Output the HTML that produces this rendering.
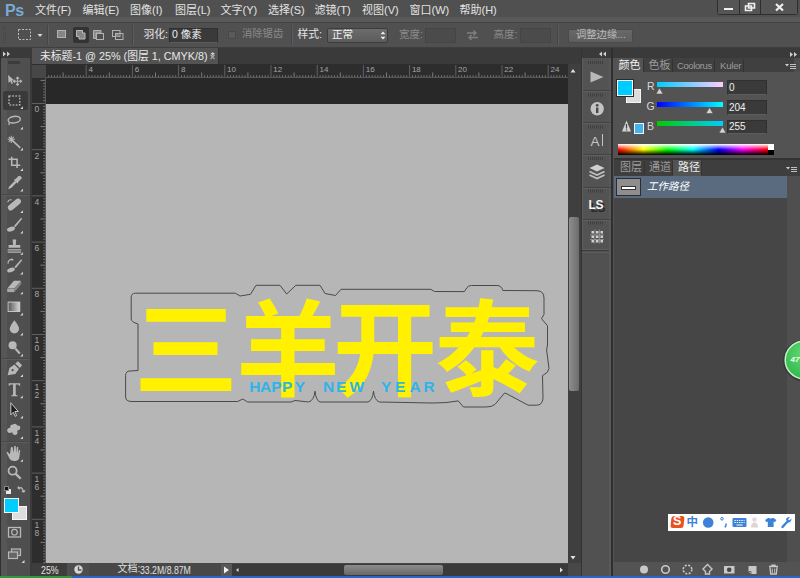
<!DOCTYPE html>
<html lang="zh"><head><meta charset="utf-8"><title>Photoshop</title>
<style>
html,body{margin:0;padding:0;background:#535353;}
#app{position:relative;width:800px;height:578px;overflow:hidden;background:#535353;font-family:"Liberation Sans","Noto Sans CJK SC",sans-serif;}
#app div,#app span{position:absolute;display:block;box-sizing:border-box;}
#app span{white-space:nowrap;line-height:1;}
#app span.h{overflow:visible;}
#ov{position:absolute;left:0;top:0;width:800px;height:578px;}
</style></head><body>
<div id="app">
<div style="left:0px;top:0px;width:800px;height:17.5px;background:#505050;"></div>
<div style="left:0px;top:17.2px;width:800px;height:4.6px;background:#595959;"></div>
<div style="left:0px;top:21.8px;width:800px;height:1.1px;background:#434343;"></div>
<div style="left:0px;top:22.9px;width:800px;height:24.6px;background:#505050;"></div>
<div style="left:0px;top:47.3px;width:800px;height:0.7px;background:#3e3e3e;"></div>
<div style="left:0px;top:48px;width:800px;height:10px;background:#3a3a3a;"></div>
<span style="left:5px;top:2.7px;font-size:16px;color:#79aad6;font-weight:bold;letter-spacing:-0.5px;">Ps</span>
<span class="h" style="left:35.0px;top:4.7px;font-size:11px;width:36.0px;height:11px;color:#e4e4e4;">文件(F)</span>
<span class="h" style="left:82.5px;top:4.7px;font-size:11px;width:35.5px;height:11px;color:#e4e4e4;">编辑(E)</span>
<span class="h" style="left:130.0px;top:4.7px;font-size:11px;width:33.0px;height:11px;color:#e4e4e4;">图像(I)</span>
<span class="h" style="left:175.0px;top:4.7px;font-size:11px;width:34.0px;height:11px;color:#e4e4e4;">图层(L)</span>
<span class="h" style="left:220.5px;top:4.7px;font-size:11px;width:37.0px;height:11px;color:#e4e4e4;">文字(Y)</span>
<span class="h" style="left:268.0px;top:4.7px;font-size:11px;width:35.0px;height:11px;color:#e4e4e4;">选择(S)</span>
<span class="h" style="left:314.5px;top:4.7px;font-size:11px;width:36.5px;height:11px;color:#e4e4e4;">滤镜(T)</span>
<span class="h" style="left:362.0px;top:4.7px;font-size:11px;width:35.5px;height:11px;color:#e4e4e4;">视图(V)</span>
<span class="h" style="left:409.5px;top:4.7px;font-size:11px;width:39.0px;height:11px;color:#e4e4e4;">窗口(W)</span>
<span class="h" style="left:459.5px;top:4.7px;font-size:11px;width:35.0px;height:11px;color:#e4e4e4;">帮助(H)</span>
<div style="left:717px;top:0px;width:81px;height:15px;background:#2e2e2e;border-radius:0 0 3px 3px;"></div>
<div style="left:718px;top:0px;width:21px;height:14px;background:#555555;"></div>
<div style="left:740px;top:0px;width:20px;height:14px;background:#555555;"></div>
<div style="left:761px;top:0px;width:36px;height:14px;background:#555555;"></div>
<div style="left:724px;top:7.5px;width:9px;height:2.5px;background:#f0f0f0;"></div>
<div style="left:47px;top:25px;width:1px;height:20px;background:#454545;"></div>
<div style="left:48px;top:25px;width:1px;height:20px;background:#5d5d5d;"></div>
<div style="left:72.5px;top:26.5px;width:16.5px;height:16.5px;background:#333333;border-radius:2px;"></div>
<div style="left:132px;top:25px;width:1px;height:20px;background:#454545;"></div>
<div style="left:133px;top:25px;width:1px;height:20px;background:#5d5d5d;"></div>
<span class="h" style="left:143.5px;top:29.0px;font-size:10.8px;width:22.0px;height:10.8px;color:#e4e4e4;">羽化:</span>
<div style="left:169px;top:27.5px;width:49px;height:15.5px;background:#3a3a3a;border:1px solid #2f2f2f;border-bottom-color:#5a5a5a;"></div>
<span class="h" style="left:172px;top:29.3px;font-size:10.5px;width:26.0px;height:10.5px;color:#f0f0f0;">0 像素</span>
<div style="left:228px;top:30.5px;width:8px;height:8.5px;background:#5a5a5a;border:1px solid #484848;"></div>
<span class="h" style="left:242px;top:29.4px;font-size:10.3px;width:38.5px;height:10.3px;color:#8a8a8a;">消除锯齿</span>
<div style="left:290.5px;top:25px;width:1px;height:20px;background:#454545;"></div>
<div style="left:291.5px;top:25px;width:1px;height:20px;background:#5d5d5d;"></div>
<span class="h" style="left:297.5px;top:29.0px;font-size:10.8px;width:23.5px;height:10.8px;color:#e4e4e4;">样式:</span>
<div style="left:327px;top:28px;width:61px;height:15px;background:#666666;border:1px solid #3c3c3c;border-radius:2px;background:linear-gradient(#6c6c6c,#5c5c5c);"></div>
<span class="h" style="left:332px;top:29.4px;font-size:10.5px;width:19.0px;height:10.5px;color:#f4f4f4;">正常</span>
<span class="h" style="left:399px;top:29.2px;font-size:10.5px;width:22.5px;height:10.5px;color:#8a8a8a;">宽度:</span>
<div style="left:425px;top:28px;width:31px;height:15px;background:#4b4b4b;border:1px solid #454545;"></div>
<span class="h" style="left:493.5px;top:29.2px;font-size:10.5px;width:22.0px;height:10.5px;color:#8a8a8a;">高度:</span>
<div style="left:520px;top:28px;width:31px;height:15px;background:#4b4b4b;border:1px solid #454545;"></div>
<div style="left:557px;top:25px;width:1px;height:20px;background:#454545;"></div>
<div style="left:558px;top:25px;width:1px;height:20px;background:#5d5d5d;"></div>
<div style="left:568px;top:28.5px;width:65px;height:14px;background:#636363;border:1px solid #4a4a4a;border-radius:2px;background:linear-gradient(#686868,#5e5e5e);"></div>
<span class="h" style="left:576px;top:29.7px;font-size:10.3px;width:48.0px;height:10.3px;color:#b8b8b8;">调整边缘...</span>
<div style="left:0px;top:58px;width:31px;height:518px;background:#565656;"></div>
<div style="left:6.8px;top:58px;width:23.2px;height:518px;background:#4f4f4f;"></div>
<div style="left:0px;top:48px;width:1px;height:528px;background:#303030;"></div>
<div style="left:30px;top:58px;width:1.5px;height:518px;background:#3b3b3b;"></div>
<div style="left:7.5px;top:61px;width:12px;height:2.5px;background:#3c3c3c;"></div>
<div style="left:3px;top:91px;width:25px;height:19px;background:#3a3a3a;border-radius:2px;"></div>
<div style="left:2px;top:194px;width:27px;height:1px;background:#474747;"></div>
<div style="left:2px;top:195px;width:27px;height:1px;background:#5c5c5c;"></div>
<div style="left:31.5px;top:48px;width:549.5px;height:16px;background:#3a3a3a;"></div>
<div style="left:32px;top:48px;width:187px;height:16px;background:#535353;border-right:1px solid #333;"></div>
<span class="h" style="left:40px;top:50.6px;font-size:10.8px;width:163.0px;height:10.8px;color:#e8e8e8;">未标题-1 @ 25% (图层 1, CMYK/8) *</span>
<div style="left:31.5px;top:64px;width:536px;height:13.5px;background:#2d2d2d;"></div>
<div style="left:31.5px;top:77.5px;width:14px;height:486px;background:#2d2d2d;"></div>
<div style="left:32px;top:65px;width:13.5px;height:12.5px;background:#474747;"></div>
<div style="left:45.5px;top:77.5px;width:522px;height:26px;background:#282828;"></div>
<div style="left:45.5px;top:103.5px;width:522px;height:459.5px;background:#b6b6b6;"></div>
<div style="left:46px;top:76.5px;width:521.5px;height:1px;background:rgba(140,140,140,0.45);"></div>
<div style="left:44.8px;top:78px;width:1px;height:485px;background:rgba(140,140,140,0.45);"></div>
<span style="left:88.5px;top:66px;font-size:8px;color:#a6a6a6;">4</span>
<span style="left:134.7px;top:66px;font-size:8px;color:#a6a6a6;">6</span>
<span style="left:180.9px;top:66px;font-size:8px;color:#a6a6a6;">8</span>
<span style="left:227.1px;top:66px;font-size:8px;color:#a6a6a6;">10</span>
<span style="left:273.3px;top:66px;font-size:8px;color:#a6a6a6;">12</span>
<span style="left:319.5px;top:66px;font-size:8px;color:#a6a6a6;">14</span>
<span style="left:365.7px;top:66px;font-size:8px;color:#a6a6a6;">16</span>
<span style="left:411.9px;top:66px;font-size:8px;color:#a6a6a6;">18</span>
<span style="left:458.1px;top:66px;font-size:8px;color:#a6a6a6;">20</span>
<span style="left:504.3px;top:66px;font-size:8px;color:#a6a6a6;">22</span>
<span style="left:550.5px;top:66px;font-size:8px;color:#a6a6a6;">24</span>
<span style="left:34.5px;top:105.3px;font-size:8.5px;color:#a6a6a6;">0</span>
<span style="left:34.5px;top:151.5px;font-size:8.5px;color:#a6a6a6;">2</span>
<span style="left:34.5px;top:197.7px;font-size:8.5px;color:#a6a6a6;">4</span>
<span style="left:34.5px;top:243.9px;font-size:8.5px;color:#a6a6a6;">6</span>
<span style="left:34.5px;top:290.1px;font-size:8.5px;color:#a6a6a6;">8</span>
<span style="left:34.5px;top:336.3px;font-size:8.5px;color:#a6a6a6;">1</span>
<span style="left:34.5px;top:344.3px;font-size:8.5px;color:#a6a6a6;">0</span>
<span style="left:34.5px;top:382.5px;font-size:8.5px;color:#a6a6a6;">1</span>
<span style="left:34.5px;top:390.5px;font-size:8.5px;color:#a6a6a6;">2</span>
<span style="left:34.5px;top:428.7px;font-size:8.5px;color:#a6a6a6;">1</span>
<span style="left:34.5px;top:436.7px;font-size:8.5px;color:#a6a6a6;">4</span>
<span style="left:34.5px;top:474.9px;font-size:8.5px;color:#a6a6a6;">1</span>
<span style="left:34.5px;top:482.9px;font-size:8.5px;color:#a6a6a6;">6</span>
<span style="left:34.5px;top:521.1px;font-size:8.5px;color:#a6a6a6;">1</span>
<span style="left:34.5px;top:529.1px;font-size:8.5px;color:#a6a6a6;">8</span>
<div style="left:567.5px;top:64px;width:13.5px;height:499px;background:#3f3f3f;"></div>
<div style="left:568.5px;top:217px;width:10px;height:174px;background:#7c7c7c;border-radius:2px;background:linear-gradient(90deg,#8e8e8e,#6c6c6c);"></div>
<div style="left:581px;top:48px;width:1px;height:528px;background:#333333;"></div>
<div style="left:31.5px;top:563px;width:549.5px;height:13px;background:#484848;"></div>
<div style="left:31.5px;top:563px;width:35px;height:13px;background:#3d3d3d;"></div>
<div style="left:66.5px;top:563px;width:22px;height:13px;background:#4e4e4e;"></div>
<span style="left:40.5px;top:564.5px;font-size:10.5px;color:#e0e0e0;transform:scaleX(0.84);transform-origin:0 0;">25%</span>
<span class="h" style="left:117.5px;top:564.0px;font-size:10px;width:22.5px;height:10px;color:#e0e0e0;">文档:</span>
<span style="left:140px;top:564.5px;font-size:10.5px;color:#e0e0e0;transform:scaleX(0.83);transform-origin:0 0;">33.2M/8.87M</span>
<div style="left:221px;top:563.5px;width:10.5px;height:12px;background:#585858;"></div>
<div style="left:231.5px;top:564px;width:336px;height:11.5px;background:#3a3a3a;"></div>
<div style="left:344px;top:564.5px;width:99px;height:10px;background:#7a7a7a;border-radius:2px;background:linear-gradient(#8c8c8c,#686868);"></div>
<div style="left:0px;top:576px;width:72px;height:2px;background:#2f9a3b;"></div>
<div style="left:72px;top:576px;width:728px;height:2px;background:#2665c9;"></div>
<div style="left:582px;top:58px;width:30px;height:518px;background:#515151;"></div>
<div style="left:582px;top:250px;width:30px;height:1px;background:#3c3c3c;"></div>
<div style="left:583px;top:251.5px;width:28px;height:1px;background:#5c5c5c;"></div>
<div style="left:582px;top:58px;width:30px;height:192px;background:#535353;border:1px solid #5e5e5e;border-top:none;"></div>
<div style="left:609.3px;top:58px;width:1.5px;height:518px;background:#595959;"></div>
<div style="left:610.8px;top:48px;width:2.7px;height:528px;background:#2f2f2f;"></div>
<div style="left:583px;top:89.5px;width:28px;height:1px;background:#424242;"></div>
<div style="left:583px;top:90.5px;width:28px;height:1px;background:#5e5e5e;"></div>
<div style="left:583px;top:121.5px;width:28px;height:1px;background:#424242;"></div>
<div style="left:583px;top:122.5px;width:28px;height:1px;background:#5e5e5e;"></div>
<div style="left:583px;top:154px;width:28px;height:1px;background:#424242;"></div>
<div style="left:583px;top:155px;width:28px;height:1px;background:#5e5e5e;"></div>
<div style="left:583px;top:186.5px;width:28px;height:1px;background:#424242;"></div>
<div style="left:583px;top:187.5px;width:28px;height:1px;background:#5e5e5e;"></div>
<div style="left:583px;top:218.5px;width:28px;height:1px;background:#424242;"></div>
<div style="left:583px;top:219.5px;width:28px;height:1px;background:#5e5e5e;"></div>
<span style="left:590.5px;top:134.5px;font-size:13.5px;color:#c4c4c4;">A</span>
<div style="left:601.5px;top:134px;width:1.3px;height:12px;background:#c4c4c4;"></div>
<span style="left:590.5px;top:201.5px;font-size:12px;color:#2c2c2c;font-weight:bold;letter-spacing:-0.3px;">LS</span>
<span style="left:588.5px;top:199px;font-size:12px;color:#f4f4f4;font-weight:bold;letter-spacing:-0.3px;">LS</span>
<div style="left:613.5px;top:58px;width:186.5px;height:518px;background:#4e4e4e;"></div>
<div style="left:613.5px;top:58px;width:180px;height:14px;background:#404040;"></div>
<div style="left:613.5px;top:72px;width:186.5px;height:86px;background:#535353;"></div>
<div style="left:613.5px;top:58px;width:29px;height:14.5px;background:#535353;"></div>
<div style="left:643px;top:59px;width:1px;height:13px;background:#333;"></div>
<div style="left:672px;top:59px;width:1px;height:13px;background:#333;"></div>
<div style="left:714px;top:59px;width:1px;height:13px;background:#333;"></div>
<div style="left:743px;top:59px;width:1px;height:13px;background:#333;"></div>
<span class="h" style="left:618.5px;top:59.9px;font-size:11px;width:19.5px;height:11px;color:#f0f0f0;">颜色</span>
<span class="h" style="left:648.5px;top:59.9px;font-size:11px;width:17.5px;height:11px;color:#9c9c9c;">色板</span>
<span style="left:677px;top:61px;font-size:9.5px;color:#9c9c9c;letter-spacing:-0.4px;">Coolorus</span>
<span style="left:720px;top:61px;font-size:9.5px;color:#9c9c9c;letter-spacing:-0.2px;">Kuler</span>
<div style="left:626px;top:89px;width:14.5px;height:14px;background:#dcdcdc;border:1px solid #f4f4f4;"></div>
<div style="left:617px;top:79.5px;width:16px;height:16.5px;background:#00ccff;border:1px solid #f8f8f8;outline:1px solid #2a2a2a;"></div>
<span style="left:647px;top:81px;font-size:10.5px;color:#d8d8d8;">R</span>
<span style="left:646.5px;top:101px;font-size:10.5px;color:#d8d8d8;">G</span>
<span style="left:647px;top:120.5px;font-size:10.5px;color:#d8d8d8;">B</span>
<div style="left:657px;top:82px;width:65.5px;height:5px;background:linear-gradient(90deg,#00ccff,#ffccff);"></div>
<div style="left:657px;top:101.5px;width:65.5px;height:5px;background:linear-gradient(90deg,#0000ff,#00ffff);"></div>
<div style="left:657px;top:121px;width:65.5px;height:5px;background:linear-gradient(90deg,#00cc00,#00ccff);"></div>
<div style="left:727px;top:80px;width:39.5px;height:14.5px;background:#3a3a3a;border:1px solid #303030;border-bottom-color:#5c5c5c;"></div>
<span style="left:729px;top:82.8px;font-size:10px;color:#f0f0f0;">0</span>
<div style="left:727px;top:100px;width:39.5px;height:14.5px;background:#3a3a3a;border:1px solid #303030;border-bottom-color:#5c5c5c;"></div>
<span style="left:729px;top:102.8px;font-size:10px;color:#f0f0f0;">204</span>
<div style="left:727px;top:119.5px;width:39.5px;height:14.5px;background:#3a3a3a;border:1px solid #303030;border-bottom-color:#5c5c5c;"></div>
<span style="left:729px;top:122.3px;font-size:10px;color:#f0f0f0;">255</span>
<div style="left:633.5px;top:123px;width:10.5px;height:10.5px;background:#45b3ea;border:1px solid #e8f4fc;"></div>
<div style="left:618px;top:143.5px;width:149.5px;height:11.5px;background:linear-gradient(90deg,#ff0000 0%,#ffff00 17%,#00ff00 33%,#00ffff 50%,#0000ff 67%,#ff00ff 83%,#ff0000 100%);"></div>
<div style="left:618px;top:143.5px;width:149.5px;height:11.5px;background:linear-gradient(180deg,#ffffff 0%,rgba(255,255,255,0) 50%,rgba(0,0,0,0) 50%,#000000 100%);"></div>
<div style="left:767.5px;top:143.5px;width:6.5px;height:6px;background:#ffffff;"></div>
<div style="left:767.5px;top:149.5px;width:6.5px;height:5.5px;background:#000000;"></div>
<div style="left:613.5px;top:158px;width:186.5px;height:2px;background:#333333;"></div>
<div style="left:613.5px;top:160px;width:186.5px;height:15.5px;background:#3e3e3e;"></div>
<div style="left:673px;top:160px;width:28px;height:15.5px;background:#535353;"></div>
<div style="left:644px;top:161px;width:1px;height:14px;background:#323232;"></div>
<div style="left:672px;top:161px;width:1px;height:14px;background:#323232;"></div>
<div style="left:701px;top:161px;width:1px;height:14px;background:#323232;"></div>
<span class="h" style="left:620px;top:162.1px;font-size:11px;width:18.0px;height:11px;color:#9c9c9c;">图层</span>
<span class="h" style="left:649px;top:162.1px;font-size:11px;width:18.5px;height:11px;color:#9c9c9c;">通道</span>
<span class="h" style="left:678px;top:162.1px;font-size:11px;width:18.5px;height:11px;color:#f0f0f0;">路径</span>
<div style="left:613.5px;top:175.5px;width:173px;height:386px;background:#464646;"></div>
<div style="left:786.5px;top:175.5px;width:13.5px;height:386px;background:#4f4f4f;"></div>
<div style="left:613.5px;top:175.5px;width:173px;height:22.5px;background:#5a6b80;"></div>
<div style="left:615.5px;top:178px;width:25px;height:18px;background:#8e8e8e;border:1px solid #2c2c2c;"></div>
<div style="left:621px;top:185.5px;width:15px;height:4px;background:#ffffff;border:1px solid #333;"></div>
<span class="h" style="left:647px;top:181.1px;font-size:10.5px;width:39.0px;height:10.5px;color:#ffffff;font-style:italic;">工作路径</span>
<div style="left:613.5px;top:561.5px;width:186.5px;height:14.5px;background:#535353;"></div>
<div style="left:2px;top:357.5px;width:27px;height:1px;background:#474747;"></div>
<div style="left:2px;top:358.5px;width:27px;height:1px;background:#5c5c5c;"></div>
<div style="left:2px;top:441px;width:27px;height:1px;background:#474747;"></div>
<div style="left:2px;top:442px;width:27px;height:1px;background:#5c5c5c;"></div>
<div style="left:6px;top:488.5px;width:5px;height:5px;background:#e8e8e8;"></div>
<div style="left:3.5px;top:486px;width:5px;height:5px;background:#141414;border:0.500px solid #888;"></div>
<div style="left:12px;top:505.5px;width:14.5px;height:14.5px;background:#dedede;border:1px solid #f6f6f6;"></div>
<div style="left:3.5px;top:498px;width:15px;height:14.5px;background:#00ccff;border:1px solid #f8f8f8;"></div>
<div style="left:668px;top:513.5px;width:127px;height:17.5px;background:#ffffff;"></div>
<div style="left:670.5px;top:516px;width:12.5px;height:11.5px;background:#e8531f;border-radius:2.500px;transform:skewX(-6deg);"></div>
<span style="left:673px;top:515.3px;font-size:12.5px;color:#ffffff;font-weight:bold;">S</span>
<span class="h" style="left:686.5px;top:516.6px;font-size:11.5px;width:12.0px;height:11.5px;color:#3d82d6;font-weight:bold;">中</span>
<svg id="ov" width="800" height="578" viewBox="0 0 800 578">
<path d="M3.5 26v18M5.500 26v18" stroke="#444" stroke-width="1" stroke-dasharray="1 1" fill="none"/>
<path d="M748.5 3.5h6v4.5h-6z M745.5 6h6v4.500h-6z" fill="none" stroke="#f0f0f0" stroke-width="1.600"/>
<path d="M776 4l7 6.500M783 4l-7 6.500" stroke="#f0f0f0" stroke-width="2.200" fill="none"/>
<rect x="18.500" y="29.500" width="12" height="10" fill="none" stroke="#bebebe" stroke-width="1" stroke-dasharray="2 1.500"/>
<path d="M37.500 34h5l-2.500 3z" fill="#d8d8d8"/>
<rect x="57.500" y="30.500" width="8" height="7" fill="#868686" stroke="#b2b2b2"/>
<path d="M76.500 30.500h6v2.500h2.500v6h-6v-2.500h-2.500z" fill="#868686" stroke="#bababa"/>
<path d="M93.500 30.500h7.500v2.500h-5v5.500h-2.500z" fill="#868686" stroke="#b2b2b2"/><rect x="96.500" y="33.500" width="7" height="6" fill="none" stroke="#b2b2b2"/>
<rect x="112.500" y="30.500" width="7.500" height="6" fill="none" stroke="#b2b2b2"/><rect x="115.500" y="33.500" width="7.500" height="6" fill="none" stroke="#b2b2b2"/><rect x="116" y="34" width="3.500" height="2.500" fill="#868686"/>
<path d="M380.500 34.200l2.500-2.700 2.500 2.700z M380.500 36.800l2.500 2.700 2.500-2.700z" fill="#eeeeee"/>
<path d="M467 33h9m-2.500-2.500l2.500 2.500-2.500 2.500M478 37.500h-9m2.500-2.500l-2.500 2.500 2.500 2.500" stroke="#808080" stroke-width="1.300" fill="none"/>
<path d="M3 51.500l3 2.500-3 2.500z M7 51.500l3 2.500-3 2.500z" fill="#d0d0d0"/>
<path d="M210.500 55l4 4m0-4l-4 4" stroke="#a8a8a8" stroke-width="1.100" fill="none"/>
<path d="M48.700 75.300v1.700 M51.500 75.300v1.700 M54.400 75.300v1.700 M57.300 75.300v1.700 M60.200 75.300v1.700 M66.0 75.300v1.700 M68.900 75.300v1.700 M71.800 75.300v1.700 M74.700 75.300v1.700 M77.500 75.300v1.700 M80.400 75.300v1.700 M83.300 75.300v1.700 M89.100 75.300v1.700 M92.0 75.300v1.700 M94.900 75.300v1.700 M97.800 75.300v1.700 M100.600 75.300v1.700 M103.500 75.300v1.700 M106.400 75.300v1.700 M112.200 75.300v1.700 M115.100 75.300v1.700 M118.0 75.300v1.700 M120.900 75.300v1.700 M123.700 75.300v1.700 M126.600 75.300v1.700 M129.500 75.300v1.700 M135.300 75.300v1.700 M138.200 75.300v1.700 M141.100 75.300v1.700 M143.900 75.300v1.700 M146.800 75.300v1.700 M149.700 75.300v1.700 M152.600 75.300v1.700 M158.400 75.300v1.700 M161.300 75.300v1.700 M164.200 75.300v1.700 M167.100 75.300v1.700 M169.900 75.300v1.700 M172.800 75.300v1.700 M175.700 75.300v1.700 M181.500 75.300v1.700 M184.400 75.300v1.700 M187.300 75.300v1.700 M190.200 75.300v1.700 M193.0 75.300v1.700 M195.900 75.300v1.700 M198.800 75.300v1.700 M204.600 75.300v1.700 M207.500 75.300v1.700 M210.400 75.300v1.700 M213.200 75.300v1.700 M216.100 75.300v1.700 M219.0 75.300v1.700 M221.900 75.300v1.700 M227.700 75.300v1.700 M230.600 75.300v1.700 M233.500 75.300v1.700 M236.400 75.300v1.700 M239.200 75.300v1.700 M242.100 75.300v1.700 M245.0 75.300v1.700 M250.800 75.300v1.700 M253.700 75.300v1.700 M256.600 75.300v1.700 M259.500 75.300v1.700 M262.300 75.300v1.700 M265.200 75.300v1.700 M268.100 75.300v1.700 M273.900 75.300v1.700 M276.800 75.300v1.700 M279.700 75.300v1.700 M282.600 75.300v1.700 M285.400 75.300v1.700 M288.300 75.300v1.700 M291.200 75.300v1.700 M297.0 75.300v1.700 M299.900 75.300v1.700 M302.800 75.300v1.700 M305.700 75.300v1.700 M308.500 75.300v1.700 M311.400 75.300v1.700 M314.300 75.300v1.700 M320.100 75.300v1.700 M323.0 75.300v1.700 M325.900 75.300v1.700 M328.800 75.300v1.700 M331.600 75.300v1.700 M334.500 75.300v1.700 M337.400 75.300v1.700 M343.200 75.300v1.700 M346.100 75.300v1.700 M349.0 75.300v1.700 M351.900 75.300v1.700 M354.700 75.300v1.700 M357.600 75.300v1.700 M360.500 75.300v1.700 M366.300 75.300v1.700 M369.200 75.300v1.700 M372.100 75.300v1.700 M375.0 75.300v1.700 M377.800 75.300v1.700 M380.700 75.300v1.700 M383.600 75.300v1.700 M389.400 75.300v1.700 M392.300 75.300v1.700 M395.200 75.300v1.700 M398.100 75.300v1.700 M400.900 75.300v1.700 M403.800 75.300v1.700 M406.700 75.300v1.700 M412.500 75.300v1.700 M415.400 75.300v1.700 M418.300 75.300v1.700 M421.200 75.300v1.700 M424.0 75.300v1.700 M426.900 75.300v1.700 M429.800 75.300v1.700 M435.600 75.300v1.700 M438.500 75.300v1.700 M441.400 75.300v1.700 M444.300 75.300v1.700 M447.100 75.300v1.700 M450.0 75.300v1.700 M452.900 75.300v1.700 M458.700 75.300v1.700 M461.600 75.300v1.700 M464.500 75.300v1.700 M467.400 75.300v1.700 M470.200 75.300v1.700 M473.100 75.300v1.700 M476.0 75.300v1.700 M481.800 75.300v1.700 M484.700 75.300v1.700 M487.600 75.300v1.700 M490.500 75.300v1.700 M493.300 75.300v1.700 M496.200 75.300v1.700 M499.100 75.300v1.700 M504.900 75.300v1.700 M507.800 75.300v1.700 M510.700 75.300v1.700 M513.500 75.300v1.700 M516.400 75.300v1.700 M519.300 75.300v1.700 M522.200 75.300v1.700 M528.0 75.300v1.700 M530.900 75.300v1.700 M533.800 75.300v1.700 M536.600 75.300v1.700 M539.500 75.300v1.700 M542.400 75.300v1.700 M545.300 75.300v1.700 M551.100 75.300v1.700 M554.0 75.300v1.700 M556.900 75.300v1.700 M559.800 75.300v1.700 M562.600 75.300v1.700 M565.500 75.300v1.700 M43.300 83.300h1.700 M43.300 86.200h1.700 M43.300 89.100h1.700 M43.300 92.0h1.700 M43.300 94.800h1.700 M43.300 97.700h1.700 M43.300 100.600h1.700 M43.300 106.400h1.700 M43.300 109.300h1.700 M43.300 112.200h1.700 M43.300 115.0h1.700 M43.300 117.900h1.700 M43.300 120.800h1.700 M43.300 123.700h1.700 M43.300 129.500h1.700 M43.300 132.400h1.700 M43.300 135.300h1.700 M43.300 138.200h1.700 M43.300 141.0h1.700 M43.300 143.900h1.700 M43.300 146.800h1.700 M43.300 152.600h1.700 M43.300 155.500h1.700 M43.300 158.400h1.700 M43.300 161.200h1.700 M43.300 164.100h1.700 M43.300 167.0h1.700 M43.300 169.900h1.700 M43.300 175.700h1.700 M43.300 178.600h1.700 M43.300 181.500h1.700 M43.300 184.400h1.700 M43.300 187.200h1.700 M43.300 190.100h1.700 M43.300 193.0h1.700 M43.300 198.800h1.700 M43.300 201.700h1.700 M43.300 204.600h1.700 M43.300 207.400h1.700 M43.300 210.300h1.700 M43.300 213.200h1.700 M43.300 216.100h1.700 M43.300 221.900h1.700 M43.300 224.800h1.700 M43.300 227.700h1.700 M43.300 230.600h1.700 M43.300 233.400h1.700 M43.300 236.300h1.700 M43.300 239.200h1.700 M43.300 245.0h1.700 M43.300 247.900h1.700 M43.300 250.800h1.700 M43.300 253.700h1.700 M43.300 256.500h1.700 M43.300 259.400h1.700 M43.300 262.300h1.700 M43.300 268.100h1.700 M43.300 271.0h1.700 M43.300 273.900h1.700 M43.300 276.800h1.700 M43.300 279.600h1.700 M43.300 282.500h1.700 M43.300 285.400h1.700 M43.300 291.200h1.700 M43.300 294.100h1.700 M43.300 297.0h1.700 M43.300 299.900h1.700 M43.300 302.700h1.700 M43.300 305.600h1.700 M43.300 308.500h1.700 M43.300 314.300h1.700 M43.300 317.200h1.700 M43.300 320.100h1.700 M43.300 323.0h1.700 M43.300 325.800h1.700 M43.300 328.700h1.700 M43.300 331.600h1.700 M43.300 337.400h1.700 M43.300 340.300h1.700 M43.300 343.200h1.700 M43.300 346.100h1.700 M43.300 348.900h1.700 M43.300 351.800h1.700 M43.300 354.700h1.700 M43.300 360.500h1.700 M43.300 363.400h1.700 M43.300 366.300h1.700 M43.300 369.200h1.700 M43.300 372.0h1.700 M43.300 374.900h1.700 M43.300 377.800h1.700 M43.300 383.600h1.700 M43.300 386.500h1.700 M43.300 389.400h1.700 M43.300 392.200h1.700 M43.300 395.100h1.700 M43.300 398.0h1.700 M43.300 400.900h1.700 M43.300 406.700h1.700 M43.300 409.600h1.700 M43.300 412.500h1.700 M43.300 415.400h1.700 M43.300 418.200h1.700 M43.300 421.100h1.700 M43.300 424.0h1.700 M43.300 429.800h1.700 M43.300 432.700h1.700 M43.300 435.600h1.700 M43.300 438.500h1.700 M43.300 441.300h1.700 M43.300 444.200h1.700 M43.300 447.100h1.700 M43.300 452.900h1.700 M43.300 455.800h1.700 M43.300 458.700h1.700 M43.300 461.600h1.700 M43.300 464.400h1.700 M43.300 467.300h1.700 M43.300 470.200h1.700 M43.300 476.0h1.700 M43.300 478.900h1.700 M43.300 481.800h1.700 M43.300 484.700h1.700 M43.300 487.500h1.700 M43.300 490.400h1.700 M43.300 493.300h1.700 M43.300 499.100h1.700 M43.300 502.0h1.700 M43.300 504.900h1.700 M43.300 507.800h1.700 M43.300 510.600h1.700 M43.300 513.500h1.700 M43.300 516.400h1.700 M43.300 522.200h1.700 M43.300 525.100h1.700 M43.300 528.0h1.700 M43.300 530.900h1.700 M43.300 533.700h1.700 M43.300 536.600h1.700 M43.300 539.500h1.700 M43.300 545.300h1.700 M43.300 548.200h1.700 M43.300 551.100h1.700 M43.300 554.0h1.700 M43.300 556.800h1.700 M43.300 559.700h1.700 M43.300 562.600h1.700" stroke="#787878" stroke-width="1" fill="none"/>
<path d="M63.100 72.500v4.500 M109.300 72.500v4.500 M155.500 72.500v4.500 M201.700 72.500v4.500 M247.900 72.500v4.500 M294.100 72.500v4.500 M340.300 72.500v4.500 M386.500 72.500v4.500 M432.700 72.500v4.500 M478.900 72.500v4.500 M525.100 72.500v4.500 M40.500 80.400h4.500 M40.500 126.600h4.500 M40.500 172.800h4.500 M40.500 219.0h4.500 M40.500 265.200h4.500 M40.500 311.400h4.500 M40.500 357.600h4.500 M40.500 403.800h4.500 M40.500 450.0h4.500 M40.500 496.200h4.500 M40.500 542.400h4.500" stroke="#7c7c7c" stroke-width="1" fill="none"/>
<path d="M86.200 65v12 M132.400 65v12 M178.600 65v12 M224.800 65v12 M271.0 65v12 M317.200 65v12 M363.400 65v12 M409.600 65v12 M455.800 65v12 M502.0 65v12 M548.200 65v12 M32 103.500h13 M32 149.700h13 M32 195.900h13 M32 242.100h13 M32 288.300h13 M32 334.500h13 M32 380.700h13 M32 426.900h13 M32 473.100h13 M32 519.300h13" stroke="#606060" stroke-width="1" fill="none"/>
<path d="M570.500 72.500h5l-2.500-3.500z M570.500 556h5l-2.500 3.500z" fill="#e0e0e0"/>
<circle cx="78.500" cy="569.500" r="4.200" fill="#d8d8d8"/><path d="M78.500 566.500v3.500h3" stroke="#555" stroke-width="1.400" fill="none"/>
<path d="M224 566.500v7l5-3.500z" fill="#f0f0f0"/>
<path d="M238.500 568v4l-2.500-2z M560 567.500v5l3-2.500z" fill="#e0e0e0"/>
<path d="M602 51.500l-3 2.500 3 2.500z M606 51.500l-3 2.500 3 2.500z" fill="#d0d0d0"/>
<path d="M588 62.500h16" stroke="#3f3f3f" stroke-width="3" stroke-dasharray="1 1" fill="none"/>
<path d="M588 95h16" stroke="#3f3f3f" stroke-width="3" stroke-dasharray="1 1" fill="none"/>
<path d="M588 127h16" stroke="#3f3f3f" stroke-width="3" stroke-dasharray="1 1" fill="none"/>
<path d="M588 158.500h16" stroke="#3f3f3f" stroke-width="3" stroke-dasharray="1 1" fill="none"/>
<path d="M588 191h16" stroke="#3f3f3f" stroke-width="3" stroke-dasharray="1 1" fill="none"/>
<path d="M588 223h16" stroke="#3f3f3f" stroke-width="3" stroke-dasharray="1 1" fill="none"/>
<path d="M590.500 71.500l13 5.500-13 5.500z" fill="#b8b8b8"/>
<circle cx="597.200" cy="108.800" r="6.700" fill="#c4c4c4"/><circle cx="597.200" cy="105.300" r="1.400" fill="#4a4a4a"/><path d="M596 107.500h2.400v5.500h-2.400z" fill="#4a4a4a"/>
<path d="M597 164.500l7.500 3.500-7.500 3.500-7.500-3.500z" fill="#d0d0d0"/><path d="M589.500 171.500l7.500 3.500 7.500-3.500M589.500 175l7.500 3.500 7.500-3.500" stroke="#c0c0c0" stroke-width="1.800" fill="none"/>
<rect x="591.500" y="231.0" width="2.500" height="2.500" fill="#cfcfcf"/><rect x="591.500" y="235.500" width="2.500" height="2.500" fill="#cfcfcf"/><rect x="591.500" y="240.0" width="2.500" height="2.500" fill="#cfcfcf"/><rect x="596.0" y="231.0" width="2.500" height="2.500" fill="#cfcfcf"/><rect x="596.0" y="235.500" width="2.500" height="2.500" fill="#cfcfcf"/><rect x="596.0" y="240.0" width="2.500" height="2.500" fill="#cfcfcf"/><rect x="600.500" y="231.0" width="2.500" height="2.500" fill="#cfcfcf"/><rect x="600.500" y="235.500" width="2.500" height="2.500" fill="#cfcfcf"/><rect x="600.500" y="240.0" width="2.500" height="2.500" fill="#cfcfcf"/>
<path d="M590 235h14M590 239.500h14M595 229.500v14M599.500 229.500v14" stroke="#a0a0a0" stroke-width="0.700" fill="none"/>
<path d="M790 52l3 2.500-3 2.500z M794 52l3 2.500-3 2.500z" fill="#d0d0d0"/>
<path d="M785 64h4l-2 2.500z" fill="#d0d0d0"/><path d="M790 64.500h6M790 66.500h6M790 68.500h6" stroke="#c0c0c0" stroke-width="1"/>
<path d="M659.500 88l3.500 6h-7z" fill="#d4d4d4" stroke="#555" stroke-width="0.600"/>
<path d="M709.500 107.500l3.500 6h-7z" fill="#d4d4d4" stroke="#555" stroke-width="0.600"/>
<path d="M722.500 127l3.500 6h-7z" fill="#d4d4d4" stroke="#555" stroke-width="0.600"/>
<path d="M626.500 120.500l4.500 11h-9z" fill="#d4d4d4"/><path d="M626.500 124v4.500M626.500 129.300v1.200" stroke="#4a4a4a" stroke-width="1.300"/>
<path d="M786 167h4l-2 2.500z" fill="#d0d0d0"/><path d="M791 167.500h6M791 169.500h6M791 171.500h6" stroke="#c0c0c0" stroke-width="1"/>
<text font-family="Liberation Sans, Noto Sans CJK SC, sans-serif" font-weight="bold" font-size="104" fill="#fff100" text-anchor="middle" y="388" x="186 288 385 487">三羊开泰</text>
<text font-family="Liberation Sans, sans-serif" font-weight="bold" font-size="15.500" fill="#2fb4e9" y="392.200"><tspan x="249.200 259.900 271.300 282.100 294.800">HAPPY </tspan><tspan x="323.100 336.100 349.500">NEW </tspan><tspan x="380.900 395.100 409.400 423.500">YEAR</tspan></text>
<path d="M135.500 293.200H235.400L240 296L250.500 294.300L256 285.300H280L286.700 294L295.800 285.300H320L325 293.500L335.500 295.500L341 289.300H430.700L434.500 291.500L464.400 291.600L467 287.600Q468.500 285.500 471.400 285.500H497Q501.500 285.500 502.900 290.500L537 290.700Q544 291 544 298V314.400L541.500 318.700L547.500 325.700V345L546.600 350L549 368.500Q548.500 373 542.500 375.500L543 398.200Q542.500 405.200 536.500 405.200H528.200L507.200 394L504.600 393L495 404.400Q492 407 486.200 407H463.500L458.200 400.900L446 402.600L432 403L379.500 402Q374.500 400.500 373.500 391.200Q372.500 400.500 368 402H320Q316 400.500 315 391.200Q314 400.500 308.600 402L295 400.500L291 402H247.600L242.800 399L237.700 401.500H132Q125.600 401.500 125.600 397V375.600Q125.600 371 130 371L138 370.500V324Q131.200 322 131.200 319V297.500Q131.200 293.200 135.500 293.200Z" fill="none" stroke="#4a4a4a" stroke-width="1" stroke-linejoin="round"/>
<g transform="translate(14.400 79) scale(0.9)"><path d="M-7 -4.500l0.500 9 2-2 1.500 3 1.500-.700-1.500-3h3z" fill="#b8b8b8"/><path d="M3.500 -1.500v8M-.500 2.500h8M3.500 -2.500l-1.500 2h3zM3.500 7.500l-1.500-2h3zM-1.500 2.500l2-1.500v3zM8.500 2.500l-2-1.500v3z" stroke="#b8b8b8" stroke-width="1" fill="#b8b8b8"/></g>
<g transform="translate(14.400 100.500) scale(0.9)"><rect x="-6" y="-5" width="12" height="10" fill="none" stroke="#d4d4d4" stroke-width="1.200" stroke-dasharray="2 1.500"/><path d="M9.500 6.500v3h-3z" fill="#d8d8d8"/></g>
<g transform="translate(14.400 121) scale(0.9)"><ellipse cx="0" cy="-1.500" rx="6.800" ry="3.600" fill="none" stroke="#b8b8b8" stroke-width="1.600" transform="rotate(-8)"/><path d="M-5 1q-2 1.500 -.500 3.500" fill="none" stroke="#b8b8b8" stroke-width="1.300"/><path d="M9.500 6.500v3h-3z" fill="#d8d8d8"/></g>
<g transform="translate(14.400 142) scale(0.9)"><path d="M-3.500 -7v8M-7.500 -3h8M-6.300 -5.800l5.600 5.600M-.700 -5.800l-5.600 5.600" stroke="#b8b8b8" stroke-width="1.200"/><path d="M-2 -1.500l8.500 8" stroke="#b8b8b8" stroke-width="1.800"/><path d="M9.500 6.500v3h-3z" fill="#d8d8d8"/></g>
<g transform="translate(14.400 162.500) scale(0.9)"><path d="M-3 -6.500v9.500h9.500M-6.500 -3.500h9.500v9.500" fill="none" stroke="#b8b8b8" stroke-width="1.700"/><path d="M9.500 6.500v3h-3z" fill="#d8d8d8"/></g>
<g transform="translate(14.400 183) scale(0.9)"><path d="M-7 7l1.500-3.500 6-6 2 2-6 6z" fill="#b8b8b8"/><path d="M0 -4l4 4M1.500 -3.500l3.500-3.500q2 -.500 2.500 1.500l-3.500 3.500z" stroke="#b8b8b8" stroke-width="1.500" fill="#b8b8b8"/><path d="M9.500 6.500v3h-3z" fill="#d8d8d8"/></g>
<g transform="translate(14.400 204.500) scale(0.9)"><rect x="-8.500" y="-3.200" width="17" height="6.400" rx="3.200" fill="#b8b8b8" transform="rotate(-40)"/><path d="M-7.500 -2.500q1-3.500 4.500-2.500" stroke="#b8b8b8" fill="none" stroke-width="1.200"/><path d="M9.500 6.500v3h-3z" fill="#d8d8d8"/></g>
<g transform="translate(14.400 225) scale(0.9)"><path d="M7.500 -8l-8 9 1.600 1.600 7.500-9.500z" fill="#b8b8b8"/><ellipse cx="-3.800" cy="4.500" rx="4.600" ry="2.500" transform="rotate(-18 -3.800 4.500)" fill="#b8b8b8"/><path d="M9.500 6.500v3h-3z" fill="#d8d8d8"/></g>
<g transform="translate(14.400 246.300) scale(0.9)"><path d="M-2 -7.500h4l-.500 6h5v3h-13v-3h5z" fill="#b8b8b8"/><path d="M-7.500 4h15M-7.500 6.500h15" stroke="#b8b8b8" stroke-width="1.200"/><path d="M9.500 6.500v3h-3z" fill="#d8d8d8"/></g>
<g transform="translate(14.400 266) scale(0.9)"><path d="M7.500 -7.500l-7.500 8.500 1.600 1.600 7-9z" fill="#b8b8b8"/><ellipse cx="-3.800" cy="4.500" rx="4.400" ry="2.300" transform="rotate(-18 -3.800 4.500)" fill="#b8b8b8"/><path d="M-7 -2.500a4 4 0 0 1 5.500-4.500" stroke="#b8b8b8" stroke-width="1.300" fill="none"/><path d="M-2.800 -8.500l2.200 2.200-3.200 .300z" fill="#b8b8b8"/><path d="M9.500 6.500v3h-3z" fill="#d8d8d8"/></g>
<g transform="translate(14.400 285.800) scale(0.9)"><path d="M-8 3l7.500-8.500h8l-7.500 8.500z" fill="#b8b8b8"/><path d="M-8 3.500h8v3.500h-8z" fill="#a8a8a8"/><path d="M0 3.500l7.500-8.500v3l-7.500 9z" fill="#8c8c8c"/><path d="M9.500 6.500v3h-3z" fill="#d8d8d8"/></g>
<defs><linearGradient id="tg" x1="0" x2="1"><stop offset="0" stop-color="#555"/><stop offset="1" stop-color="#d8d8d8"/></linearGradient></defs>
<g transform="translate(14.400 307) scale(0.9)"><rect x="-7" y="-5.500" width="13" height="10.500" fill="url(#tg)" stroke="#cfcfcf" stroke-width="1"/><path d="M9.500 6.500v3h-3z" fill="#d8d8d8"/></g>
<g transform="translate(14.400 327) scale(0.9)"><path d="M0 -7.500q5.200 6.500 5.200 9.500a5.200 5.200 0 0 1-10.400 0q0-3 5.200-9.500z" fill="#b8b8b8"/><path d="M9.500 6.500v3h-3z" fill="#d8d8d8"/></g>
<g transform="translate(14.400 348) scale(0.9)"><circle cx="-2" cy="-3" r="4.500" fill="#b8b8b8"/><path d="M1 .500l5 5.500" stroke="#b8b8b8" stroke-width="2.400"/><path d="M9.500 6.500v3h-3z" fill="#d8d8d8"/></g>
<g transform="translate(14.400 368.500) scale(0.9)"><path d="M-7.500 7.500l2-8 5.500-4 5 5-4 5.500z" fill="#b8b8b8"/><path d="M1 -5.500l3-2.500 4.500 4.500-2.500 3z" fill="#b8b8b8"/><circle cx="-2" cy="1.800" r="1.300" fill="#555"/><path d="M9.500 6.500v3h-3z" fill="#d8d8d8"/></g>
<g transform="translate(14.400 389.800) scale(0.88)"><path d="M-6.500 -7.500h13v3h-1q-.300-1.500-1.800-1.500h-2.200v11q0 1.300 1.500 1.300h.500v1h-7v-1h.500q1.500 0 1.500-1.300v-11h-2.200q-1.500 0-1.800 1.500h-1z" fill="#b8b8b8"/><path d="M9.500 6.500v3h-3z" fill="#d8d8d8"/></g>
<g transform="translate(14.400 410) scale(0.9)"><path d="M-4 -8v13.500l2.800-3 2 4.500 1.700-.800-2-4.500h3.800z" fill="#1e1e1e" stroke="#c8c8c8" stroke-width="1.100"/><path d="M9.500 6.500v3h-3z" fill="#d8d8d8"/></g>
<g transform="translate(14.400 430.500) scale(0.9)"><path d="M-1 -7q3-1.500 4 1.500q4 -.500 3.500 3q-.500 2.500-3.500 2.500q1.500 4-2 5q-3 .500-3.500-3q-4.500 2-5.500-1.500q-.500-3 3.500-3.500q-1-3.500 3.500-4z" fill="#b8b8b8"/><path d="M9.500 6.500v3h-3z" fill="#d8d8d8"/></g>
<g transform="translate(14.400 453.300) scale(0.9)"><path d="M-5 1l-2.500-2.500q-1.200-.500-1.200 1l3.700 7q1.500 2 4.500 2h2q3.500-.500 4-4l1-7.500q-.300-1.200-1.500-.500l-1 4 .300-7q-.500-1.200-1.700-.300l-.600 6.500-.500-7.500q-.700-1.200-1.800 0l-.200 7.500-1.500-6.500q-1-1-1.800 0z" fill="#b8b8b8"/><path d="M9.500 6.500v3h-3z" fill="#d8d8d8"/></g>
<g transform="translate(14.400 472) scale(0.9)"><circle cx="-2" cy="-1.500" r="4.500" fill="none" stroke="#b8b8b8" stroke-width="2"/><path d="M1.500 2l5.500 5.500" stroke="#b8b8b8" stroke-width="2.600"/></g>
<path d="M18 488.500q3.500-2.500 5 1.500M23 490l.800 2.200M18 488.500l.5-2.200M18 488.500l2.300.400M23.800 492.200l1.200-2M23.800 492.200l-2-1.200" stroke="#b8b8b8" stroke-width="1.200" fill="none"/>
<rect x="8.500" y="527.500" width="12" height="9.500" fill="none" stroke="#b8b8b8" stroke-width="1.300"/><circle cx="14.500" cy="532.200" r="2.800" fill="none" stroke="#b8b8b8" stroke-width="1.200"/>
<rect x="11.500" y="549" width="9" height="6.500" fill="#666" stroke="#b8b8b8" stroke-width="1.200"/><rect x="8.500" y="552" width="9" height="6.500" fill="#666" stroke="#b8b8b8" stroke-width="1.200"/><path d="M24.500 560v3h-3z" fill="#d8d8d8"/>
<circle cx="644" cy="569.500" r="4" fill="#c8c8c8"/>
<circle cx="665.500" cy="569.500" r="3.800" fill="none" stroke="#c8c8c8" stroke-width="1.600"/>
<circle cx="687.500" cy="569.500" r="4.300" fill="none" stroke="#c8c8c8" stroke-width="1.600" stroke-dasharray="2 1.400"/>
<path d="M707.500 564.500l4.500 4.500-2.500 2.500v2.500h-4v-2.500l-2.500-2.500z" fill="none" stroke="#c8c8c8" stroke-width="1.400"/>
<rect x="724" y="566" width="10.500" height="7.500" fill="#c8c8c8"/><circle cx="729.200" cy="569.700" r="2.300" fill="#444"/>
<path d="M748.500 566h8v8h-5.500l-2.500-2.500z" fill="#c8c8c8"/><path d="M748.500 571.500h2.500v2.500" fill="none" stroke="#555" stroke-width="0.800"/>
<path d="M769 566.500h9M772 566.500v-1.300h3v1.300M770 567.500l.700 6.500h5.600l.700-6.500" fill="none" stroke="#c8c8c8" stroke-width="1.300"/><path d="M772.300 568.500v4.500M774.700 568.500v4.500" stroke="#c8c8c8" stroke-width="0.900"/>
<circle cx="708.200" cy="522.500" r="5.300" fill="#3d82d6"/>
<circle cx="722" cy="518.800" r="1.300" fill="none" stroke="#3d82d6" stroke-width="1"/><path d="M726 523.500q.500 2.500-1.200 3.800" stroke="#3d82d6" stroke-width="1.500" fill="none"/>
<rect x="732.500" y="518" width="14" height="9" rx="1" fill="#3d82d6"/><path d="M734.500 520.500h10M734.500 522.500h10" stroke="#fff" stroke-width="1" stroke-dasharray="1.300 1"/><path d="M736.500 525h6" stroke="#fff" stroke-width="1"/>
<circle cx="754.500" cy="519.500" r="2.300" fill="#e6d6d6"/><path d="M751 527.500q0-5 3.500-5t3.500 5z" fill="#e0d4d4"/>
<path d="M765 520l3-2h1.500q1.200 1.300 2.400 0h1.500l3 2-1.500 2.200-1.300-.800v5.600h-5.800v-5.600l-1.300.800z" fill="#3d82d6"/>
<path d="M782.500 527l5-5.500" stroke="#3d82d6" stroke-width="2.400" stroke-linecap="round"/><path d="M786 519.500a3 3 0 0 1 4-2.300l-2 2 1.300 1.300 2-2a3 3 0 0 1-3.500 3.800z" fill="#3d82d6"/>
<defs><radialGradient id="gb" cx="0.5" cy="0.35" r="0.7"><stop offset="0" stop-color="#5fdc72"/><stop offset="1" stop-color="#2fb447"/></radialGradient></defs>
<circle cx="804" cy="360.500" r="21" fill="#2a2f2a" opacity="0.550"/><circle cx="804" cy="360" r="18.800" fill="url(#gb)" stroke="#c4f0cb" stroke-width="1.500"/>
<text x="790.500" y="362.300" font-family="Liberation Sans, sans-serif" font-weight="bold" font-style="italic" font-size="8" fill="#effff0">47</text>
</svg>
</div>
</body></html>
